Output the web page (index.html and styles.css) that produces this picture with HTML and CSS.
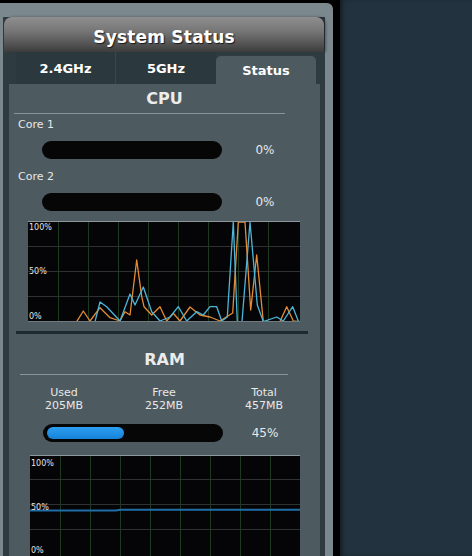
FILE: index.html
```html
<!DOCTYPE html>
<html>
<head>
<meta charset="utf-8">
<link rel="stylesheet" href="styles.css">
</head>
<body>
<div class="page">
  <div class="left">
    <div class="outer">
      <div class="panel">
        <div class="header">System Status</div>
        <div class="tabs">
          <div class="tab first">2.4GHz</div>
          <div class="tab">5GHz</div>
          <div class="tab active">Status</div>
        </div>
        <div class="content">
          <div class="sec-title">CPU</div>
          <div class="rule cpu-rule"></div>

          <div class="core-label">Core 1</div>
          <div class="meter cpu-meter">
            <div class="bar"><div class="fill" style="width:0%"></div></div>
            <div class="pct">0%</div>
          </div>

          <div class="core-label second">Core 2</div>
          <div class="meter cpu-meter">
            <div class="bar"><div class="fill" style="width:0%"></div></div>
            <div class="pct">0%</div>
          </div>

          <div class="graph cpu-graph">
            <svg width="272" height="101" viewBox="0 0 272 101">
              <rect x="0" y="0" width="272" height="101" fill="#050507"/>
              <g stroke="#1d3a20" stroke-width="1">
                <line x1="30.5" y1="1" x2="30.5" y2="100"/>
                <line x1="60.5" y1="1" x2="60.5" y2="100"/>
                <line x1="90.5" y1="1" x2="90.5" y2="100"/>
                <line x1="120.5" y1="1" x2="120.5" y2="100"/>
                <line x1="150.5" y1="1" x2="150.5" y2="100"/>
                <line x1="180.5" y1="1" x2="180.5" y2="100"/>
                <line x1="210.5" y1="1" x2="210.5" y2="100"/>
                <line x1="240.5" y1="1" x2="240.5" y2="100"/>
              </g>
              <g stroke="#2f3232" stroke-width="1">
                <line x1="0" y1="25.5" x2="272" y2="25.5"/>
                <line x1="0" y1="50.5" x2="272" y2="50.5"/>
                <line x1="0" y1="75.5" x2="272" y2="75.5"/>
              </g>
              <polyline fill="none" stroke="#e38b35" stroke-width="1.3" stroke-linejoin="round"
                points="0,100.6 48.7,100.6 55.3,90 62,100 72,86.7 82,96.7 92,100 97,90.7 102,94 108.7,39 113.7,75.7 116,85.7 123.7,94 132,85.7 138.7,100 145.3,92.3 152,100 162,86 172,94 182,96 192,100 204.7,92 210.3,1 217,1 222.7,89 228.7,34 235.3,100.6 252,100.6 258.7,85.7 265.3,100 272,100.6"/>
              <polyline fill="none" stroke="#4db6d8" stroke-width="1.3" stroke-linejoin="round"
                points="0,100.6 67,100.6 72,81 78.7,85.7 92,100 102,73 107,84 115.3,66 123.7,90.7 132,100 142,96 150.3,85.7 158.7,100 168.7,90.7 175.3,94 182,85.7 188.7,85.7 193.7,100 199.3,96 205.3,1 209.3,100.6 214,100.6 222,1 229.3,84 235.3,100.6 248.7,96 255.3,100 264.7,85.7 270.3,100 272,100.6"/>
              <line x1="0" y1="0.5" x2="272" y2="0.5" stroke="#8e989c" stroke-width="1"/>
              <line x1="0" y1="100.5" x2="272" y2="100.5" stroke="#6f7b80" stroke-width="1"/>
              <g class="glabel">
                <text x="1" y="9">100%</text>
                <text x="1" y="52.5">50%</text>
                <text x="1" y="98">0%</text>
              </g>
            </svg>
          </div>

          <div class="sep"></div>

          <div class="sec-title ram-title">RAM</div>
          <div class="rule ram-rule"></div>

          <div class="stats">
            <div class="stat"><div>Used</div><div>205MB</div></div>
            <div class="stat"><div>Free</div><div>252MB</div></div>
            <div class="stat"><div>Total</div><div>457MB</div></div>
          </div>

          <div class="meter ram-meter">
            <div class="bar"><div class="fill" style="width:45%"></div></div>
            <div class="pct">45%</div>
          </div>

          <div class="graph ram-graph">
            <svg width="270" height="101" viewBox="0 0 270 101">
              <rect x="0" y="0" width="270" height="101" fill="#050507"/>
              <g stroke="#1d3a20" stroke-width="1">
                <line x1="30.5" y1="1" x2="30.5" y2="101"/>
                <line x1="60.5" y1="1" x2="60.5" y2="101"/>
                <line x1="90.5" y1="1" x2="90.5" y2="101"/>
                <line x1="120.5" y1="1" x2="120.5" y2="101"/>
                <line x1="150.5" y1="1" x2="150.5" y2="101"/>
                <line x1="180.5" y1="1" x2="180.5" y2="101"/>
                <line x1="210.5" y1="1" x2="210.5" y2="101"/>
                <line x1="240.5" y1="1" x2="240.5" y2="101"/>
              </g>
              <g stroke="#2f3232" stroke-width="1">
                <line x1="0" y1="24.5" x2="270" y2="24.5"/>
                <line x1="0" y1="49.5" x2="270" y2="49.5"/>
                <line x1="0" y1="74.5" x2="270" y2="74.5"/>
              </g>
              <polyline fill="none" stroke="#1f6ea8" stroke-width="2"
                points="0,55.6 86,55.6 90,54.8 270,54.8"/>
              <line x1="0" y1="0.5" x2="270" y2="0.5" stroke="#8e989c" stroke-width="1"/>
              <g class="glabel">
                <text x="1" y="10.7">100%</text>
                <text x="1" y="55">50%</text>
                <text x="1" y="97.7">0%</text>
              </g>
            </svg>
          </div>
        </div>
      </div>
    </div>
  </div>
  <div class="right"></div>
</div>
</body>
</html>
```

FILE: styles.css
```css
html, body {
  margin: 0;
  padding: 0;
}
body {
  background: #22333f;
  font-family: "DejaVu Sans", Verdana, sans-serif;
  color: #e8e8e8;
}
.page {
  display: flex;
  width: 472px;
  height: 556px;
  overflow: hidden;
}
.left {
  flex: none;
  width: 340px;
  height: 556px;
  background: #000;
  padding-top: 3px;
  box-sizing: border-box;
}
.right {
  flex: 1;
  background: #22333f;
  box-shadow: inset 4px 0 5px -2px rgba(0, 0, 0, 0.5);
}
.outer {
  width: 333px;
  height: 553px;
  background: #7b888d;
  border-top-right-radius: 6px;
  padding: 14px 0 0 3px;
  box-sizing: border-box;
}
.panel {
  width: 322px;
  height: 539px;
  display: flex;
  flex-direction: column;
  background: #2f3b41;
}
.header {
  flex: none;
  margin: 0 1px;
  height: 31px;
  padding-top: 4px;
  line-height: 32px;
  text-align: center;
  border-radius: 8px 8px 0 0;
  background: linear-gradient(#8f8f8f 0%, #767676 40%, #555555 75%, #3c3c3c 100%);
  color: #fff;
  font-weight: bold;
  font-size: 17px;
  letter-spacing: 0.2px;
  text-shadow: 1px 1px 1px #1a1a1a;
  box-shadow: 2px 0 3px rgba(0, 0, 0, 0.35);
}
.tabs {
  flex: none;
  height: 32px;
  display: flex;
  align-items: flex-end;
  padding-left: 13px;
  background: #2e3b41;
}
.tab {
  width: 100px;
  height: 26px;
  padding-top: 2px;
  line-height: 26px;
  text-align: center;
  font-weight: bold;
  font-size: 13px;
  color: #fff;
  box-sizing: content-box;
}
.tab.first {
  border-right: 1px solid #3a474d;
  width: 99px;
  background: #2b383e;
  height: 32px;
  line-height: 34px;
  padding-top: 0;
}
.tab:nth-child(2) {
  background: #2b383e;
  height: 32px;
  line-height: 34px;
  padding-top: 0;
}
.tab.active {
  background: #4d5a60;
  border-radius: 5px 5px 0 0;
}
.content {
  flex: 1;
  margin: 0 5px 0 6px;
  background: #4d5a60;
  overflow: hidden;
}
.sec-title {
  padding-top: 5px;
  line-height: 20px;
  font-size: 16px;
  font-weight: bold;
  text-align: center;
  color: #ececec;
}
.rule {
  height: 0;
  border-top: 1px solid #8a9499;
  margin-top: 4px;
}
.cpu-rule {
  margin-left: 5px;
  width: 271px;
}
.ram-rule {
  margin-left: 11px;
  width: 268px;
}
.core-label {
  margin-top: 4px;
  padding-left: 9px;
  font-size: 11px;
  line-height: 14px;
  color: #e8e8e8;
}
.core-label.second {
  margin-top: 11px;
}
.meter {
  display: flex;
  align-items: center;
  margin-top: 9px;
}
.cpu-meter {
  margin-left: 33px;
}
.bar {
  width: 180px;
  height: 18px;
  background: #060606;
  border-radius: 9px;
  padding: 3px 4px;
  box-sizing: border-box;
}
.fill {
  height: 12px;
  border-radius: 6px;
  background: linear-gradient(#2c9ff0, #1682da);
}
.pct {
  width: 86px;
  text-align: center;
  font-size: 12px;
  color: #e8e8e8;
}
.ram-meter {
  margin-left: 34px;
  margin-top: 12px;
}
.ram-meter .pct {
  width: 84px;
}
.graph {
  line-height: 0;
}
.graph svg {
  display: block;
}
.cpu-graph {
  margin-top: 10px;
  margin-left: 19px;
}
.ram-graph {
  margin-top: 13px;
  margin-left: 21px;
}
.glabel text {
  font-family: "DejaVu Sans", Verdana, sans-serif;
  font-size: 8px;
  fill: #e4e4e4;
}
.sep {
  margin-top: 9px;
  margin-left: 7px;
  width: 292px;
  height: 3px;
  background: #1f2a2f;
}
.ram-title {
  margin-top: 16px;
  padding-top: 0;
}
.stats {
  display: flex;
  margin-top: 11px;
  margin-left: 5px;
}
.stat {
  width: 100px;
  text-align: center;
  font-size: 11px;
  line-height: 13px;
  color: #e8e8e8;
}
```
